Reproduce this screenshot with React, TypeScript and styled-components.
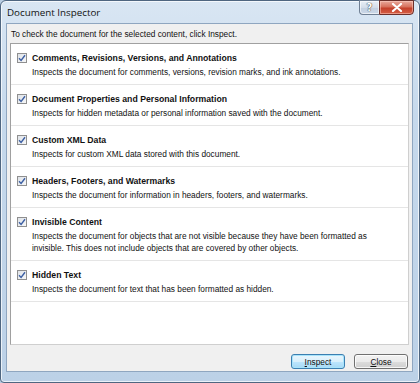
import React from 'react';
import styled, { createGlobalStyle } from 'styled-components';

type Item = { title: string; desc: string[] };

const items: Item[] = [
  {
    title: 'Comments, Revisions, Versions, and Annotations',
    desc: ['Inspects the document for comments, versions, revision marks, and ink annotations.'],
  },
  {
    title: 'Document Properties and Personal Information',
    desc: ['Inspects for hidden metadata or personal information saved with the document.'],
  },
  {
    title: 'Custom XML Data',
    desc: ['Inspects for custom XML data stored with this document.'],
  },
  {
    title: 'Headers, Footers, and Watermarks',
    desc: ['Inspects the document for information in headers, footers, and watermarks.'],
  },
  {
    title: 'Invisible Content',
    desc: [
      'Inspects the document for objects that are not visible because they have been formatted as',
      'invisible. This does not include objects that are covered by other objects.',
    ],
  },
  {
    title: 'Hidden Text',
    desc: ['Inspects the document for text that has been formatted as hidden.'],
  },
];

const App: React.FC = () => {
  return (
    <>
      <GlobalStyle />
      <Window>
        <TitleBar>
          <Title>Document Inspector</Title>
          <Controls>
            <HelpButton>?</HelpButton>
            <CloseX>
              <svg width="12" height="9" viewBox="0 0 12 9">
                <path d="M2 1 L10 8 M10 1 L2 8" stroke="#fff" strokeWidth="2.2" strokeLinecap="round" />
              </svg>
            </CloseX>
          </Controls>
        </TitleBar>

        <Client>
          <Intro>To check the document for the selected content, click Inspect.</Intro>

          <Panel>
            {items.map((item) => (
              <Row key={item.title}>
                <Check>
                  <svg width="8" height="8" viewBox="0 0 8 8">
                    <path d="M1 4.2 L3.1 6.4 L7 1.3" fill="none" stroke="#3c5fa3" strokeWidth="1.4" />
                  </svg>
                </Check>
                <Heading>{item.title}</Heading>
                <Desc>
                  {item.desc.map((line) => (
                    <div key={line}>{line}</div>
                  ))}
                </Desc>
              </Row>
            ))}
          </Panel>

          <Footer>
            <Button $default>
              <u>I</u>nspect
            </Button>
            <Button>
              <u>C</u>lose
            </Button>
          </Footer>
        </Client>
      </Window>
    </>
  );
};

// Styled Components
const GlobalStyle = createGlobalStyle`
  html, body {
    margin: 0;
    padding: 0;
    background: #b9cde2;
  }
`;

const Window = styled.div`
  box-sizing: border-box;
  width: 420px;
  height: 383px;
  display: flex;
  flex-direction: column;
  padding: 0 6px 10px 5px;
  border: 1px solid #4f6680;
  border-radius: 6px 6px 4px 4px;
  background: linear-gradient(180deg, #d9e6f3 0%, #c6d9ec 30%, #bcd1e7 100%);
  box-shadow: inset 0 0 0 1px rgba(255, 255, 255, 0.7);
  font-family: 'Liberation Sans', Arial, sans-serif;
`;

const TitleBar = styled.div`
  height: 22px;
  flex: none;
  display: flex;
  justify-content: space-between;
  align-items: flex-start;
`;

const Title = styled.div`
  padding: 5px 0 0 1px;
  font-family: 'Open Sans', 'Liberation Sans', sans-serif;
  font-size: 9.8px;
  line-height: 13px;
  color: #111;
`;

const Controls = styled.div`
  display: flex;
  margin-top: -1px;
  margin-right: -1px;
`;

const HelpButton = styled.div`
  width: 20px;
  height: 15px;
  box-sizing: border-box;
  border: 1px solid #6f7f93;
  border-right: none;
  border-radius: 0 0 0 4px;
  background: linear-gradient(180deg, #e9eff6 0%, #d3dde9 50%, #c2cfdf 51%, #cbd8e8 100%);
  box-shadow: inset 0 0 0 1px rgba(255, 255, 255, 0.6);
  display: flex;
  align-items: center;
  justify-content: center;
  font-family: 'DejaVu Sans', sans-serif;
  font-size: 10px;
  font-weight: bold;
  color: #fff;
  text-shadow: 0 0 1px #333, 0 0 1px #333;
`;

const CloseX = styled.div`
  width: 35px;
  height: 15px;
  box-sizing: border-box;
  border: 1px solid #6b2f2a;
  border-radius: 0 0 4px 0;
  background: linear-gradient(180deg, #e9a99c 0%, #d7705c 45%, #c4402b 55%, #d55f45 100%);
  box-shadow: inset 0 0 0 1px rgba(255, 210, 200, 0.5);
  display: flex;
  align-items: center;
  justify-content: center;
`;

const Client = styled.div`
  flex: 1;
  display: flex;
  flex-direction: column;
  background: #f0f0f0;
  border: 1px solid #8fa6c0;
  padding: 0 3px 1px 3px;
  font-size: 8.3px;
  color: #111;
`;

const Intro = styled.div`
  padding: 4px 0 0 1px;
  height: 15px;
  line-height: 12px;
`;

const Panel = styled.div`
  flex: 1;
  background: #fff;
  border: 1px solid #a0a0a0;
  border-right-color: #cfcfcf;
  border-bottom-color: #cfcfcf;
`;

const Row = styled.div`
  display: grid;
  grid-template-columns: 10px 1fr;
  column-gap: 5px;
  padding: 8px 6px 6px 6px;
  border-bottom: 1px solid #e5e5e5;
`;

const Check = styled.div`
  width: 10px;
  height: 10px;
  box-sizing: border-box;
  margin-top: 1px;
  border: 1px solid #8f8f8f;
  background: linear-gradient(135deg, #dfe3e8 0%, #f6f7f8 100%);
  display: flex;
  align-items: center;
  justify-content: center;
`;

const Heading = styled.div`
  font-weight: bold;
  font-size: 8.7px;
  line-height: 12px;
`;

const Desc = styled.div`
  grid-column: 2;
  margin-top: 2px;
  line-height: 12px;
`;

const Footer = styled.div`
  height: 24px;
  display: flex;
  justify-content: flex-end;
  align-items: flex-end;
  gap: 9px;
  padding: 0 1px 1px 0;
`;

const Button = styled.div<{ $default?: boolean }>`
  width: 54px;
  height: 15px;
  box-sizing: border-box;
  border: 1px solid ${(p) => (p.$default ? '#3c7fb1' : '#707070')};
  border-radius: 3px;
  background: ${(p) =>
    p.$default
      ? 'linear-gradient(180deg, #eaf6fd 0%, #d9f0fc 50%, #bee6fd 51%, #a7d9f5 100%)'
      : 'linear-gradient(180deg, #f2f2f2 0%, #ebebeb 50%, #dddddd 51%, #cfcfcf 100%)'};
  box-shadow: inset 0 0 0 1px ${(p) => (p.$default ? '#a8e4fb' : 'rgba(255,255,255,0.8)')};
  display: flex;
  align-items: center;
  justify-content: center;
  line-height: 12px;
  color: #111;

  u {
    text-decoration-thickness: 1px;
  }
`;

export default App;
